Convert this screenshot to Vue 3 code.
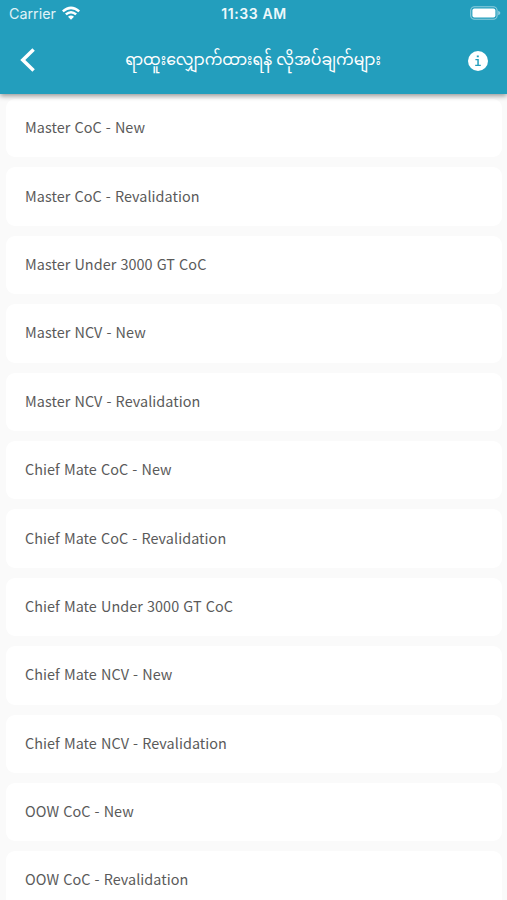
<template>
    <div class="screen">
        <header class="header">
            <div class="status-bar">
                <div class="carrier">
                    <span>Carrier</span>
                    <svg class="wifi" viewBox="0 0 18 14">
                        <path d="M0 4.5 Q9 -3.4 18 4.5 L16.4 6.3 Q9 0 1.6 6.3 Z" />
                        <path d="M3 7.6 Q9 2.5 15 7.6 L13.3 9.3 Q9 5.8 4.7 9.3 Z" />
                        <path d="M6 10.7 Q9 8.1 12 10.7 L9 13.7 Z" />
                    </svg>
                </div>
                <span class="time">11:33 AM</span>
                <svg class="battery" viewBox="0 0 31 14">
                    <rect class="shell" x="0.7" y="0.7" width="26.4" height="12.6" rx="3.8" />
                    <rect x="2.4" y="2.4" width="23" height="9.2" rx="2" />
                    <path class="cap" d="M28.2 4.8 Q30.4 5.6 30.4 7 Q30.4 8.4 28.2 9.2 Z" />
                </svg>
            </div>
            <div class="toolbar">
                <button class="icon-button" type="button" aria-label="Back">
                    <svg class="back" viewBox="0 0 16 24">
                        <path d="M13.6 1.6 L2.8 12 L13.6 22.4" />
                    </svg>
                </button>
                <h1>ရာထူးလျှောက်ထားရန် လိုအပ်ချက်များ</h1>
                <button class="icon-button" type="button" aria-label="Info">
                    <svg class="info" viewBox="0 0 20 20">
                        <circle cx="10" cy="10" r="10" />
                        <path class="mark" d="M8.8 4.4 H10.8 V6.2 H8.8 Z M7.4 8.1 H10.8 V13.8 H12.8 V14.9 H7.2 V13.8 H9.3 V9.2 H7.4 Z" />
                    </svg>
                </button>
            </div>
        </header>

        <ul class="list">
            <li v-for="item in items" :key="item" class="card">{{ item }}</li>
        </ul>
    </div>
</template>

<script setup>
const items = [
    'Master CoC - New',
    'Master CoC - Revalidation',
    'Master Under 3000 GT CoC',
    'Master NCV - New',
    'Master NCV - Revalidation',
    'Chief Mate CoC - New',
    'Chief Mate CoC - Revalidation',
    'Chief Mate Under 3000 GT CoC',
    'Chief Mate NCV - New',
    'Chief Mate NCV - Revalidation',
    'OOW CoC - New',
    'OOW CoC - Revalidation'
]
</script>

<style>
body {
    background: #fafafa;
}
</style>

<style scoped>
.screen {
    height: 900px;
    overflow: hidden;
    display: flex;
    flex-direction: column;
    background: #fafafa;
}

.header {
    position: relative;
    z-index: 1;
    flex: none;
    height: 94px;
    background: #239ebd;
    color: #ffffff;
    box-shadow: 0 2px 5px rgba(0, 0, 0, 0.4);
}

.status-bar {
    display: grid;
    grid-template-columns: 1fr auto 1fr;
    align-items: center;
    height: 27px;
    padding: 0 6px 0 9px;
    font-family: Inter, sans-serif;
    font-size: 14.3px;
}

.carrier {
    display: flex;
    align-items: center;
    gap: 6px;
    color: #e0f2f7;
}

.wifi {
    width: 18px;
    height: 14px;
    margin-top: -2px;
    fill: #ffffff;
}

.time {
    margin-right: 2px;
    font-size: 14px;
    font-weight: 600;
    letter-spacing: 0.6px;
    color: #edf8fb;
}

.battery {
    justify-self: end;
    width: 31px;
    height: 14px;
    margin-top: -1px;
    fill: #ffffff;
}

.battery .shell {
    fill: none;
    stroke: #8fcddd;
    stroke-width: 1.1;
}

.battery .cap {
    fill: #8fcddd;
}

.toolbar {
    display: flex;
    align-items: center;
    justify-content: space-between;
    height: 66px;
    padding: 0 19px 0 20px;
}

.icon-button {
    display: flex;
    padding: 0;
    border: none;
    background: none;
}

.back {
    width: 16px;
    height: 24px;
    fill: none;
    stroke: #ffffff;
    stroke-width: 3.5;
}

.info {
    width: 20px;
    height: 20px;
    margin-top: 1px;
    fill: #ffffff;
}

.info .mark {
    fill: #239ebd;
}

h1 {
    margin: 0;
    padding: 2px 0 0 2px;
    font-family: 'Noto Sans Myanmar', 'Noto Sans', sans-serif;
    font-size: 15.7px;
    font-weight: 400;
    white-space: nowrap;
}

.list {
    display: flex;
    flex-direction: column;
    gap: 10px;
    margin: 0;
    padding: 5px 5px 0 6px;
    list-style: none;
}

.card {
    flex: none;
    display: flex;
    align-items: center;
    height: 58.4px;
    box-sizing: border-box;
    padding: 0 19px 3px;
    border-radius: 9px;
    background: #ffffff;
    color: #5a5a5a;
    font-family: 'Noto Sans CJK SC', sans-serif;
    font-size: 14.4px;
    letter-spacing: 0.06px;
    word-spacing: 0.8px;
}
</style>
